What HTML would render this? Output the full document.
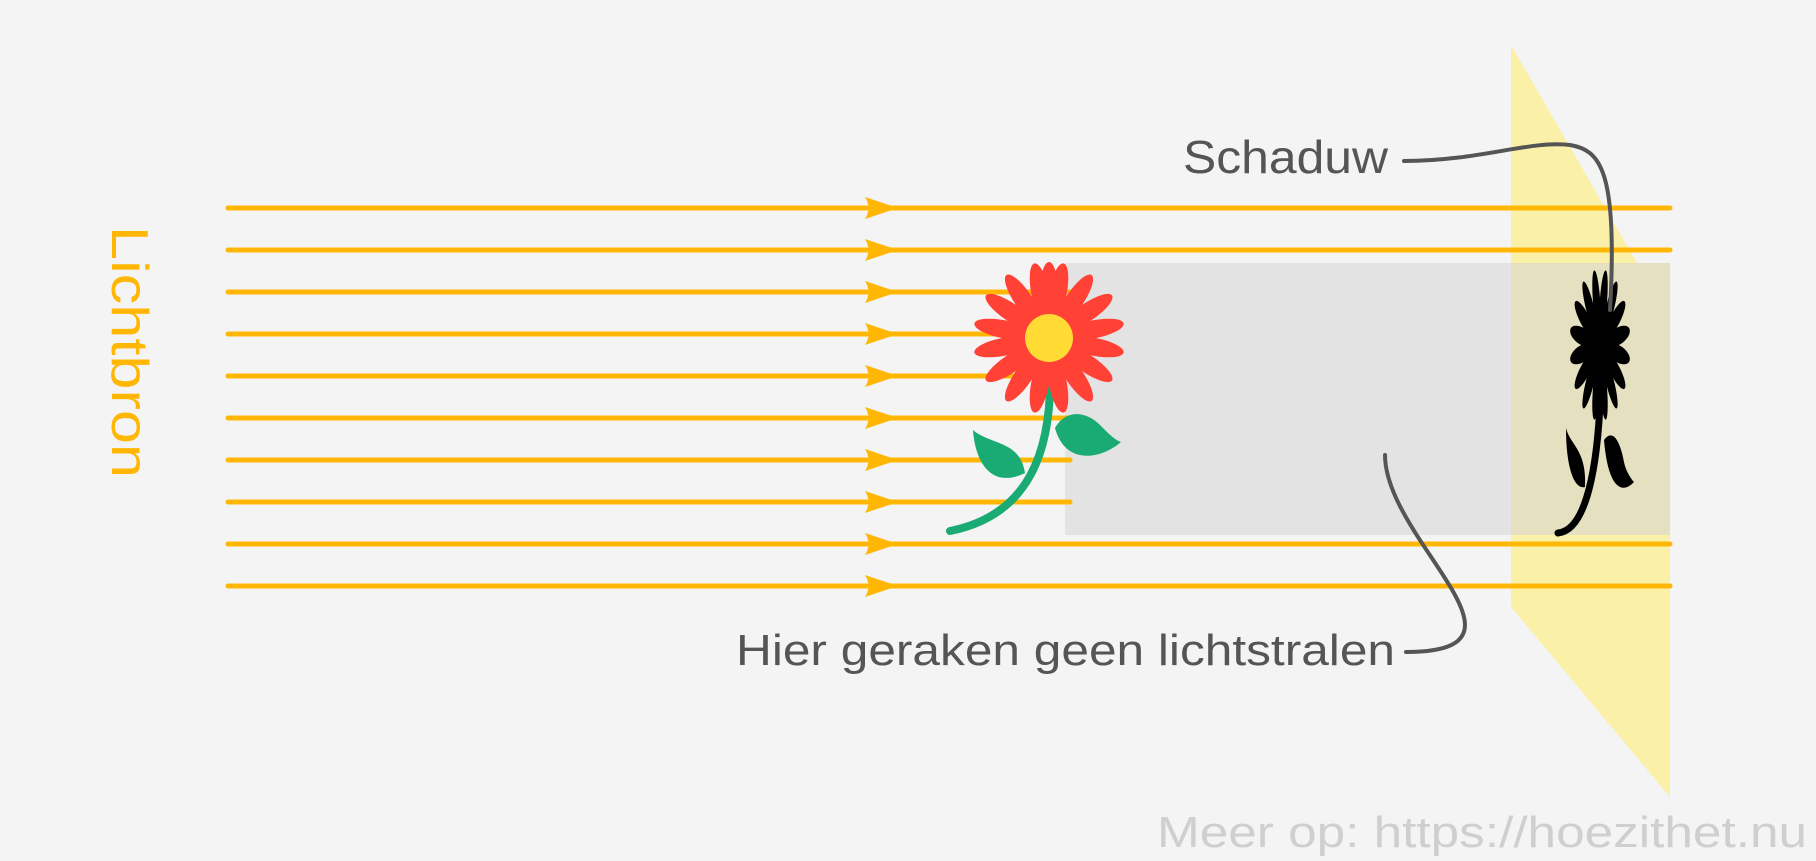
<!DOCTYPE html>
<html><head><meta charset="utf-8"><style>
html,body{margin:0;padding:0;background:#f4f4f4;}
svg{display:block}
text{font-family:"Liberation Sans",sans-serif;}
</style></head><body>
<svg width="1816" height="861" viewBox="0 0 1816 861" xmlns="http://www.w3.org/2000/svg">
<rect width="1816" height="861" fill="#f4f4f4"/>
<polygon points="1511,45 1670,320 1670,797 1511,607" fill="#faf0a8"/>
<rect x="1065" y="263" width="446" height="272" fill="#e3e3e3"/>
<polygon points="1511,263 1670,263 1670,535 1511,535" fill="#e5e0c0"/>
<g stroke="#ffb703" stroke-width="5" stroke-linecap="round">
<line x1="228" y1="208" x2="1670" y2="208"/>
<line x1="228" y1="250" x2="1670" y2="250"/>
<line x1="228" y1="292" x2="1070" y2="292"/>
<line x1="228" y1="334" x2="1070" y2="334"/>
<line x1="228" y1="376" x2="1070" y2="376"/>
<line x1="228" y1="418" x2="1070" y2="418"/>
<line x1="228" y1="460" x2="1070" y2="460"/>
<line x1="228" y1="502" x2="1070" y2="502"/>
<line x1="228" y1="544" x2="1670" y2="544"/>
<line x1="228" y1="586" x2="1670" y2="586"/>
</g>
<g fill="#ffb703">
<path d="M865,197 L898,208 L865,219 Q872,208 865,197Z"/>
<path d="M865,239 L898,250 L865,261 Q872,250 865,239Z"/>
<path d="M865,281 L898,292 L865,303 Q872,292 865,281Z"/>
<path d="M865,323 L898,334 L865,345 Q872,334 865,323Z"/>
<path d="M865,365 L898,376 L865,387 Q872,376 865,365Z"/>
<path d="M865,407 L898,418 L865,429 Q872,418 865,407Z"/>
<path d="M865,449 L898,460 L865,471 Q872,460 865,449Z"/>
<path d="M865,491 L898,502 L865,513 Q872,502 865,491Z"/>
<path d="M865,533 L898,544 L865,555 Q872,544 865,533Z"/>
<path d="M865,575 L898,586 L865,597 Q872,586 865,575Z"/>
</g>
<text transform="translate(112,226) rotate(90)" font-size="52" fill="#ffb703" textLength="252" lengthAdjust="spacingAndGlyphs">Lichtbron</text>
<!-- flower -->
<path d="M1050,370 C1052,450 1030,515 950,531" stroke="#1aaa74" stroke-width="8" fill="none" stroke-linecap="round"/>
<path d="M1025,473 C990,490 975,460 973,430 C990,445 1020,440 1025,473Z" fill="#1aaa74"/>
<path d="M1055,428 C1065,410 1085,410 1100,425 C1110,435 1115,440 1121,442 C1100,460 1065,465 1055,428Z" fill="#1aaa74"/>
<g fill="#ff4136" transform="translate(1049,338)">
<g id="p"><ellipse cx="0" cy="-46" rx="9" ry="30"/></g>
<use href="#p" transform="rotate(11)"/><use href="#p" transform="rotate(-11)"/>
<use href="#p" transform="rotate(34)"/><use href="#p" transform="rotate(56)"/>
<use href="#p" transform="rotate(79)"/><use href="#p" transform="rotate(101)"/>
<use href="#p" transform="rotate(124)"/><use href="#p" transform="rotate(146)"/>
<use href="#p" transform="rotate(169)"/><use href="#p" transform="rotate(191)"/>
<use href="#p" transform="rotate(214)"/><use href="#p" transform="rotate(236)"/>
<use href="#p" transform="rotate(259)"/><use href="#p" transform="rotate(281)"/>
<use href="#p" transform="rotate(304)"/><use href="#p" transform="rotate(326)"/>
</g>
<circle cx="1049" cy="338" r="24" fill="#ffdb33"/>
<!-- shadow -->
<g transform="translate(1600,345) scale(0.4,1)" fill="#000">
<use href="#p" transform="rotate(11)"/><use href="#p" transform="rotate(-11)"/>
<use href="#p" transform="rotate(34)"/><use href="#p" transform="rotate(56)"/>
<use href="#p" transform="rotate(79)"/><use href="#p" transform="rotate(101)"/>
<use href="#p" transform="rotate(124)"/><use href="#p" transform="rotate(146)"/>
<use href="#p" transform="rotate(169)"/><use href="#p" transform="rotate(191)"/>
<use href="#p" transform="rotate(214)"/><use href="#p" transform="rotate(236)"/>
<use href="#p" transform="rotate(259)"/><use href="#p" transform="rotate(281)"/>
<use href="#p" transform="rotate(304)"/><use href="#p" transform="rotate(326)"/>
<ellipse cx="0" cy="0" rx="22" ry="22"/>
</g>
<path d="M1601,370 C1600,450 1590,530 1558,533" stroke="#000" stroke-width="7" fill="none" stroke-linecap="round"/>
<path d="M1566,428 C1566,470 1575,490 1585,487 C1587,450 1570,445 1566,428Z"/>
<path d="M1604,440 C1615,425 1622,450 1624,462 C1626,472 1632,480 1634,482 C1622,495 1608,488 1604,440Z"/>
<!-- connectors -->
<path d="M1404,161 C1480,161 1530,140 1570,145 C1600,150 1618,170 1610,310" stroke="#555" stroke-width="4" fill="none" stroke-linecap="round"/>
<path d="M1385,455 C1385,540 1550,652 1406,652" stroke="#555" stroke-width="4" fill="none" stroke-linecap="round"/>
<text x="1183" y="173" font-size="46" fill="#555" textLength="205" lengthAdjust="spacingAndGlyphs">Schaduw</text>
<text x="736" y="665" font-size="44" fill="#555" textLength="659" lengthAdjust="spacingAndGlyphs">Hier geraken geen lichtstralen</text>
<text x="1157" y="847" font-size="44" fill="#cfcfcf" textLength="650" lengthAdjust="spacingAndGlyphs">Meer op: https://hoezithet.nu</text>
</svg>
</body></html>
